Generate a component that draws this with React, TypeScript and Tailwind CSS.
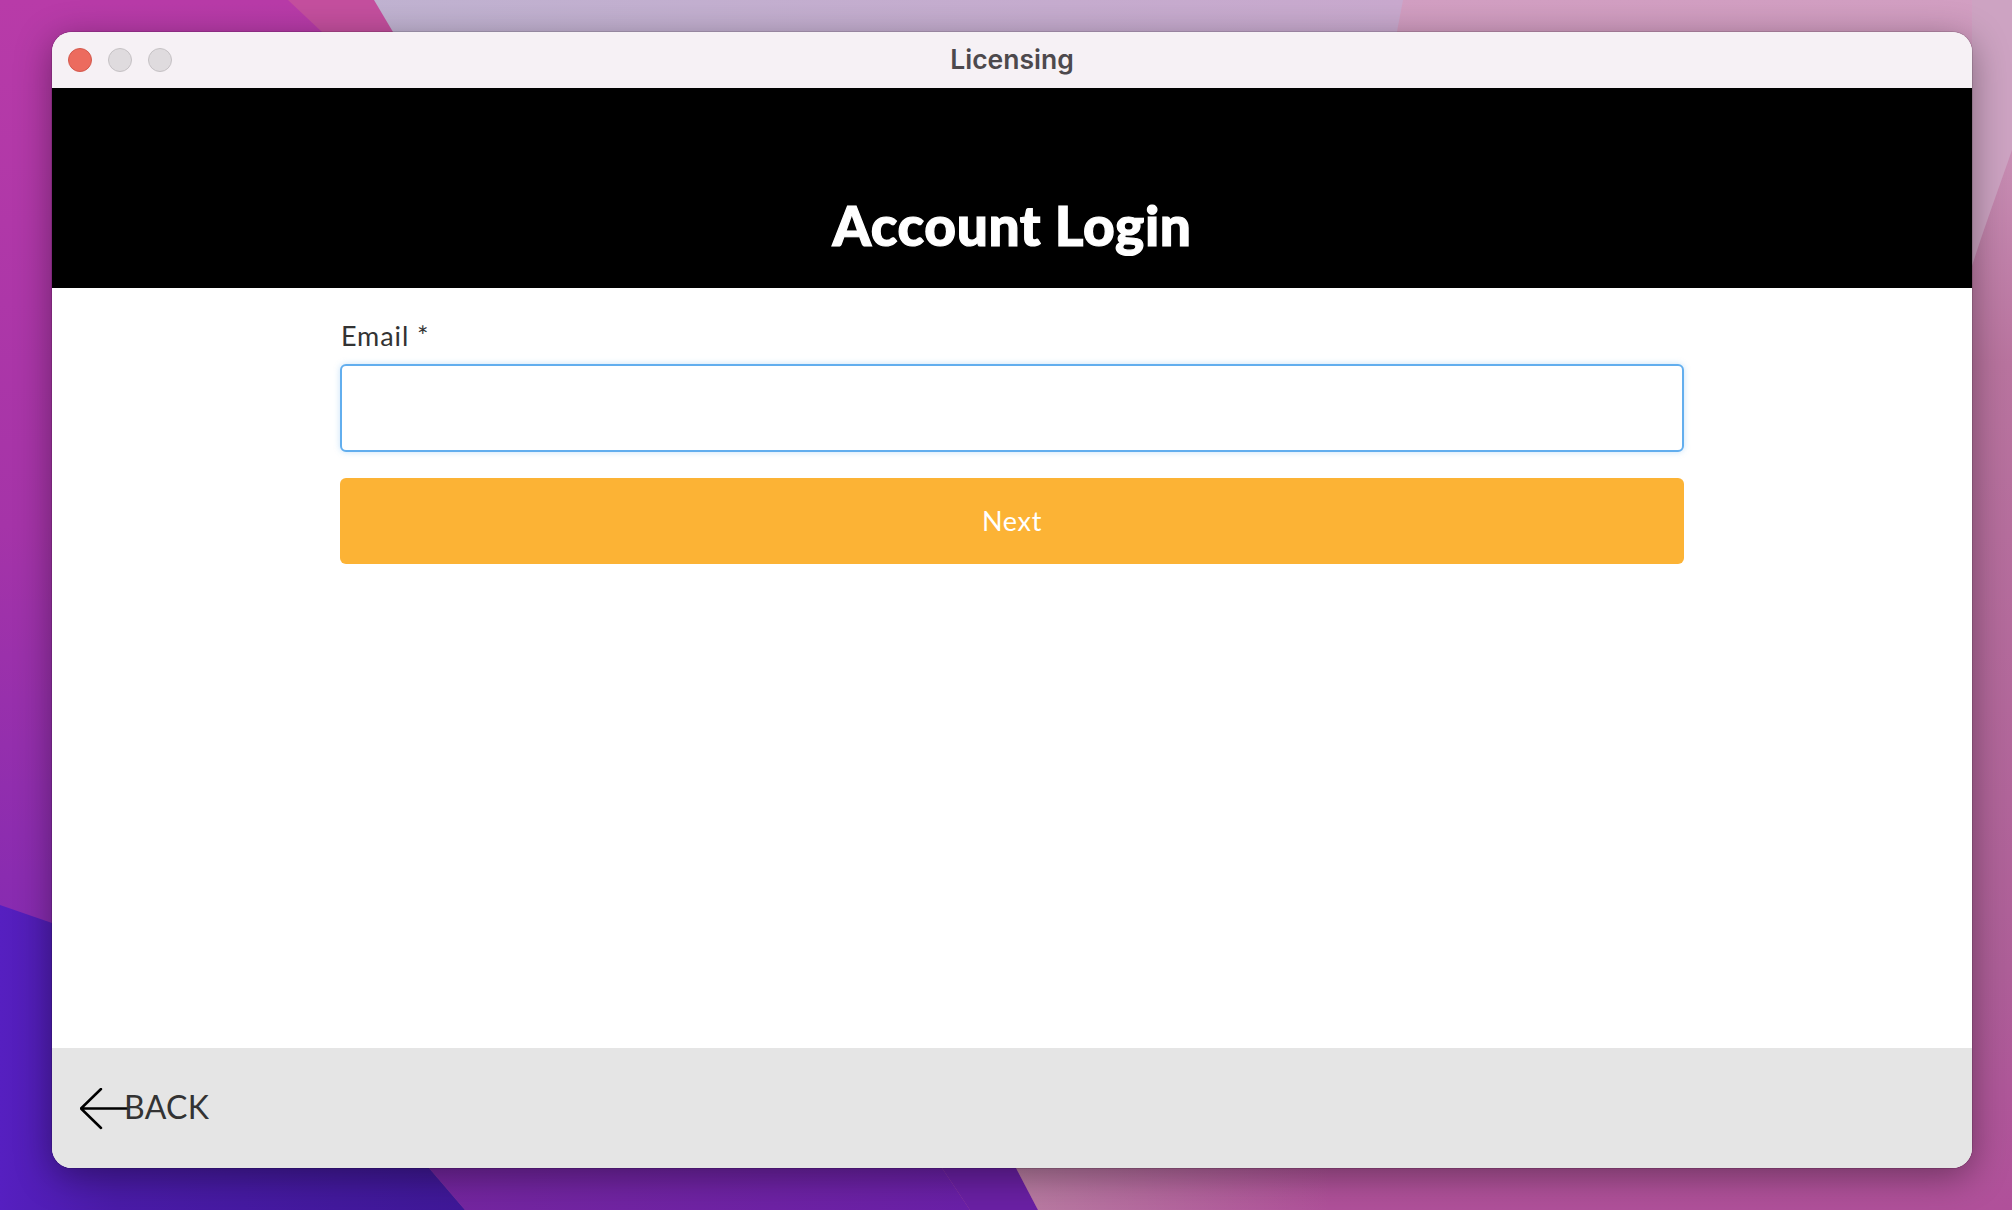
export default function App() {
  return (
    <div className="relative w-[2012px] h-[1210px] overflow-hidden pt-[32px] pl-[52px]">
      <svg className="absolute inset-0" width="2012" height="1210" viewBox="0 0 2012 1210">
        <defs>
          <linearGradient id="magenta" x1="0" y1="0" x2="0" y2="1">
            <stop offset="0" stopColor="#b83ba8" />
            <stop offset="0.45" stopColor="#a534a8" />
            <stop offset="0.75" stopColor="#8a2cb0" />
            <stop offset="1" stopColor="#7a27b0" />
          </linearGradient>
          <linearGradient id="lav" x1="0" y1="0" x2="1" y2="0">
            <stop offset="0" stopColor="#bdb6d2" />
            <stop offset="1" stopColor="#c9a9ce" />
          </linearGradient>
          <linearGradient id="rosy" x1="0" y1="0" x2="0" y2="1">
            <stop offset="0" stopColor="#d29fc2" />
            <stop offset="0.3" stopColor="#b9749f" />
            <stop offset="0.8" stopColor="#ae5f98" />
            <stop offset="1" stopColor="#b0509a" />
          </linearGradient>
          <linearGradient id="deep" x1="0" y1="0" x2="1" y2="0">
            <stop offset="0" stopColor="#561fc0" />
            <stop offset="0.25" stopColor="#4a1ba8" />
            <stop offset="1" stopColor="#3f1898" />
          </linearGradient>
          <linearGradient id="mid" x1="0" y1="0" x2="1" y2="0">
            <stop offset="0" stopColor="#7526a0" />
            <stop offset="1" stopColor="#6a20a8" />
          </linearGradient>
          <linearGradient id="haze" x1="0" y1="0" x2="1" y2="0">
            <stop offset="0" stopColor="#c09aa8" stopOpacity="0.6" />
            <stop offset="1" stopColor="#c09aa8" stopOpacity="0" />
          </linearGradient>
        </defs>
        <rect width="2012" height="1210" fill="url(#rosy)" />
        <polygon points="374,0 1403,0 1380,120 1000,1000 900,1100 0,700 0,0" fill="url(#lav)" />
        <polygon points="288,0 374,0 393,32 420,300 900,1100 0,880 0,0" fill="#c44f9e" />
        <polygon points="0,0 288,0 322,32 500,300 900,1168 0,1168" fill="url(#magenta)" />
        <polygon points="429,1168 465,1210 970,1210 942,1168" fill="url(#mid)" />
        <polygon points="942,1168 970,1210 1038,1210 1016,1168" fill="#6a20a4" />
        <polygon points="1016,1168 1038,1210 1330,1210 1330,1168" fill="url(#haze)" />
        <path d="M1972 266 C1985 225 2000 185 2012 150 L2012 0 L1972 0 Z" fill="#cda3c2" />
        <polygon points="0,905 52,923 200,1000 429,1168 465,1210 0,1210" fill="url(#deep)" />
      </svg>
      <div className="relative flex flex-col w-[1920px] h-[1136px] rounded-[20px] overflow-hidden bg-white shadow-[0_0_0_1px_rgba(0,0,0,0.12),0_8px_36px_rgba(0,0,0,0.38)] font-['Lato',sans-serif]">
        <div className="relative flex items-center justify-center h-[56px] bg-[#f6f1f5] pb-[2px]">
          <div className="absolute left-[16px] top-[16px] flex gap-[16px]">
            <span className="w-[24px] h-[24px] rounded-full bg-[#ec6b5e] border border-[#d3594d]" />
            <span className="w-[24px] h-[24px] rounded-full bg-[#dfdbde] border border-[#c5c1c4]" />
            <span className="w-[24px] h-[24px] rounded-full bg-[#dfdbde] border border-[#c5c1c4]" />
          </div>
          <span className="font-['Inter',sans-serif] font-semibold text-[26.5px] leading-none text-[#4d494d]">Licensing</span>
        </div>
        <div className="flex items-end justify-center h-[200px] bg-black pb-[32px]">
          <h1 className="font-black text-[55px] leading-[62px] text-white tracking-[0.6px] [-webkit-text-stroke:1.2px_white]">Account Login</h1>
        </div>
        <div className="flex-1 px-[288px] pt-[32px]">
          <label className="block pl-[1px] text-[27px] tracking-[0.9px] leading-[32px] text-[#333333] mb-[12px]">Email *</label>
          <input className="block w-full h-[88px] rounded-[6px] border-2 border-[#62aeee] bg-white shadow-[0_0_6px_rgba(98,174,238,0.35)] outline-none" />
          <button className="flex items-center justify-center w-full h-[86px] mt-[26px] rounded-[6px] bg-[#fcb335] text-white text-[27px] tracking-[0.7px]">Next</button>
        </div>
        <div className="flex items-center h-[120px] bg-[#e5e5e5] pl-[28px]">
          <svg className="mt-[2px]" width="50" height="42" viewBox="0 0 50 42" fill="none" stroke="#000" strokeWidth="2.5" strokeLinecap="round" strokeLinejoin="round">
            <path d="M1 20.5H48M21 1L1 20.5L21 40" />
          </svg>
          <span className="-ml-[6px] mb-[2px] text-[32px] tracking-[0.3px] leading-none text-[#333333]">BACK</span>
        </div>
      </div>
    </div>
  );
}
